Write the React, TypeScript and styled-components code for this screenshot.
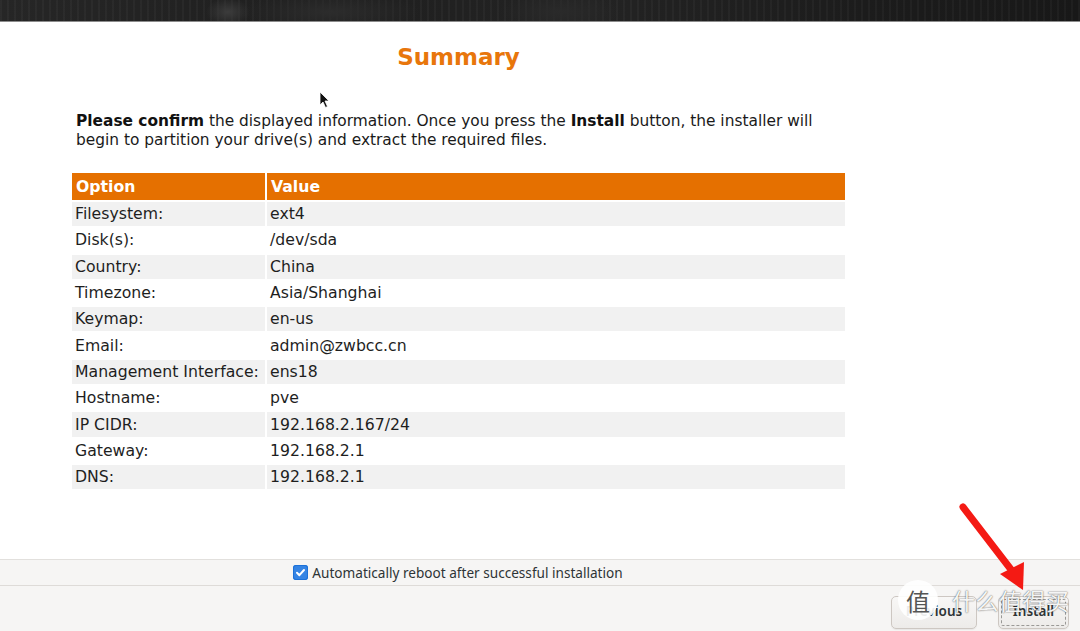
import styled, { createGlobalStyle, css } from "styled-components";

type SummaryRow = {
  option: string;
  value: string;
};

const rows: SummaryRow[] = [
  { option: "Filesystem:", value: "ext4" },
  { option: "Disk(s):", value: "/dev/sda" },
  { option: "Country:", value: "China" },
  { option: "Timezone:", value: "Asia/Shanghai" },
  { option: "Keymap:", value: "en-us" },
  { option: "Email:", value: "admin@zwbcc.cn" },
  { option: "Management Interface:", value: "ens18" },
  { option: "Hostname:", value: "pve" },
  { option: "IP CIDR:", value: "192.168.2.167/24" },
  { option: "Gateway:", value: "192.168.2.1" },
  { option: "DNS:", value: "192.168.2.1" },
];

const GlobalStyle = createGlobalStyle`
  html, body {
    margin: 0;
    padding: 0;
    background: #ffffff;
  }
  body {
    font-family: "DejaVu Sans", "Liberation Sans", sans-serif;
    color: #1a1a1a;
  }
`;

const Page = styled.div`${() => css`
  position: relative;
  display: flex;
  flex-direction: column;
  width: 1080px;
  height: 631px;
  overflow: hidden;
  background: #ffffff;
`}`;

const Banner = styled.div`${() => css`
  height: 21px;
  flex: none;
  border-bottom: 1px solid #8c8c8c;
  background:
    radial-gradient(ellipse 22px 14px at 228px 12px, #3c3c3c, transparent),
    radial-gradient(ellipse 90px 20px at 330px 12px, #2c2c2c, transparent),
    radial-gradient(ellipse 60px 20px at 560px 12px, #2a2a2a, transparent),
    repeating-linear-gradient(90deg, rgba(255, 255, 255, 0.03) 0 2px, transparent 2px 7px),
    linear-gradient(90deg, #262626 0%, #1f1f1f 30%, #232323 55%, #1c1c1c 80%, #181818 100%);
`}`;

const Content = styled.main`${() => css`
  flex: 1;
  display: flex;
  flex-direction: column;
  padding-left: 70px;
  width: 777px;
`}`;

const Title = styled.h1`${() => css`
  margin: 20px 0 0 0;
  text-align: center;
  font-size: 23px;
  line-height: 30px;
  font-weight: 700;
  color: #e8760b;
`}`;

const Intro = styled.p`${() => css`
  margin: 40px 0 0 6px;
  width: 770px;
  font-size: 15.4px;
  line-height: 19px;
  color: #1a1a1a;

  b {
    font-weight: 700;
    color: #111;
  }
`}`;

const Table = styled.table`${() => css`
  margin-top: 21px;
  border-spacing: 2px;
  width: 777px;
  font-size: 15.7px;
`}`;

const HeadCell = styled.th<{ $width?: number }>`${({ $width }) => css`
  height: 27px;
  padding: 0 4px;
  text-align: left;
  font-weight: 700;
  color: #ffffff;
  background: #e57000;
  ${$width ? `width: ${$width}px;` : ""}
  box-sizing: border-box;
`}`;

const Row = styled.tr<{ $shaded: boolean }>`${({ $shaded }) => css`
  background: ${$shaded ? "#f1f1f1" : "#ffffff"};
`}`;

const Cell = styled.td`${() => css`
  height: 24.3px;
  padding: 0 3px;
  line-height: 18px;
  color: #1e1e1e;
`}`;

const Footer = styled.div`${() => css`
  flex: none;
  background: #f6f5f4;
  border-top: 1px solid #e2e0dd;
`}`;

const CheckRow = styled.label`${() => css`
  display: flex;
  align-items: center;
  justify-content: center;
  gap: 4px;
  height: 25px;
  padding-right: 164px;
  border-bottom: 1px solid #dedbd8;
  font-family: "Noto Sans", "DejaVu Sans", sans-serif;
  font-size: 13.6px;
  color: #2e3436;
`}`;

const CheckBox = styled.span`${() => css`
  display: inline-flex;
  align-items: center;
  justify-content: center;
  width: 15px;
  height: 15px;
  border-radius: 3px;
  background: #3584e4;
  box-shadow: inset 0 0 0 1px #1c71d8;
`}`;

const ButtonBar = styled.div`${() => css`
  display: flex;
  justify-content: flex-end;
  align-items: flex-start;
  gap: 21px;
  height: 45px;
  padding: 10px 11px 0 0;
  box-sizing: border-box;
`}`;

const Button = styled.button<{ $focused?: boolean; $width: number }>`${({ $focused, $width }) => css`
  width: ${$width}px;
  height: 33px;
  border: 1px solid #cdc7c2;
  border-radius: 5px;
  background: linear-gradient(#f8f7f6, #edebe9);
  box-shadow: 0 1px 1px rgba(0, 0, 0, 0.06);
  font-family: "Noto Sans", "DejaVu Sans", sans-serif;
  font-size: 13.5px;
  font-weight: 600;
  color: #2e3436;
  padding: 0 0 4px 0;
  ${$focused ? "outline: 1px dashed #9a9996; outline-offset: -4px;" : ""}
`}`;

const Arrow = styled.svg`${() => css`
  position: absolute;
  left: 950px;
  top: 498px;
`}`;

const Cursor = styled.svg`${() => css`
  position: absolute;
  left: 319px;
  top: 91px;
`}`;

const Watermark = styled.div`${() => css`
  position: absolute;
  left: 898px;
  top: 580px;
  display: flex;
  align-items: center;
  gap: 14px;
  font-family: "Noto Sans CJK SC", sans-serif;
  pointer-events: none;
`}`;

const WatermarkBadge = styled.span`${() => css`
  display: inline-flex;
  align-items: center;
  justify-content: center;
  width: 40px;
  height: 40px;
  border-radius: 50%;
  background: rgba(255, 255, 255, 0.9);
  color: #555;
  font-size: 24px;
`}`;

const WatermarkText = styled.span`${() => css`
  font-size: 23px;
  letter-spacing: 0.5px;
  color: rgba(255, 255, 255, 0.96);
  text-shadow:
    0 0 1px rgba(0, 0, 0, 0.55),
    0 0 2px rgba(0, 0, 0, 0.35);
`}`;

export default function App() {
  return (
    <Page>
      <GlobalStyle />
      <Banner />
      <Content>
        <Title>Summary</Title>
        <Intro>
          <b>Please confirm</b> the displayed information. Once you press the <b>Install</b> button, the installer will
          begin to partition your drive(s) and extract the required files.
        </Intro>
        <Table>
          <thead>
            <tr>
              <HeadCell $width={193}>Option</HeadCell>
              <HeadCell>Value</HeadCell>
            </tr>
          </thead>
          <tbody>
            {rows.map((row, index) => (
              <Row key={row.option} $shaded={index % 2 === 0}>
                <Cell>{row.option}</Cell>
                <Cell>{row.value}</Cell>
              </Row>
            ))}
          </tbody>
        </Table>
      </Content>
      <div style={{ flex: 1 }} />
      <Footer>
        <CheckRow>
          <CheckBox>
            <svg width="11" height="11" viewBox="0 0 11 11">
              <path d="M2 5.8 L4.4 8.2 L9 3" stroke="#fff" strokeWidth="2" fill="none" strokeLinecap="round" strokeLinejoin="round" />
            </svg>
          </CheckBox>
          Automatically reboot after successful installation
        </CheckRow>
        <ButtonBar>
          <Button $width={86}>Previous</Button>
          <Button $width={71} $focused>Install</Button>
        </ButtonBar>
      </Footer>
      <Cursor width="12" height="18" viewBox="0 0 12 18">
        <path d="M1 1 L1 14 L4 11 L6.5 16.5 L8.5 15.5 L6 10 L10 10 Z" fill="#111" stroke="#fff" strokeWidth="0.8" />
      </Cursor>
      <Watermark>
        <WatermarkBadge>值</WatermarkBadge>
        <WatermarkText>什么值得买</WatermarkText>
      </Watermark>
      <Arrow width="90" height="100" viewBox="0 0 90 100">
        <line x1="13" y1="9" x2="66" y2="78" stroke="#f41a14" strokeWidth="7" strokeLinecap="round" />
        <path d="M50 76 L73 92 L74 64 Z" fill="#f41a14" />
      </Arrow>
    </Page>
  );
}
